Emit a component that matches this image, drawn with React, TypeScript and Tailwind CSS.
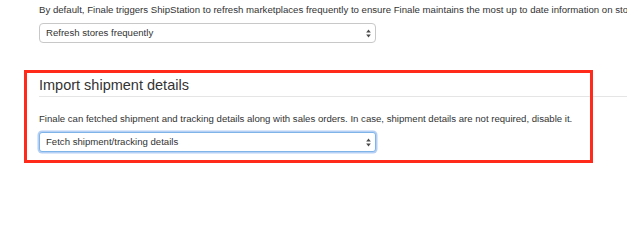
import React from "react";

function Arrows() {
  return (
    <svg width="5" height="9" viewBox="0 0 5 9" className="shrink-0">
      <path d="M2.5 0.5 L4.8 3.6 L0.2 3.6 Z" fill="#4a4a4a" />
      <path d="M2.5 8.5 L4.8 5.4 L0.2 5.4 Z" fill="#4a4a4a" />
    </svg>
  );
}

export default function App() {
  return (
    <div
      className="relative w-[627px] h-[227px] overflow-hidden bg-white text-[#333]"
      style={{ fontFamily: '"Liberation Sans", Arial, sans-serif' }}
    >
      <div className="pl-[39px] pt-[4px]">
        <p className="whitespace-nowrap text-[9.65px] leading-[12px]">
          By default, Finale triggers ShipStation to refresh marketplaces frequently to ensure Finale maintains the most up to date information on stores.
        </p>
        <div className="mt-[7px] w-[337px] h-[20px] border border-[#c8c8c8] rounded-[4px] bg-white flex items-center justify-between pl-[6px] pr-[4px] text-[9.6px] text-[#333]">
          <span>Refresh stores frequently</span>
          <Arrows />
        </div>

        <h4 className="mt-[34px] text-[14.5px] leading-[17px] font-normal text-[#333]">
          Import shipment details
        </h4>
        <div className="mt-[2px] border-t border-[#e5e5e5]" />
        <p className="mt-[16px] whitespace-nowrap text-[9.6px] leading-[12px]">
          Finale can fetched shipment and tracking details along with sales orders. In case, shipment details are not required, disable it.
        </p>
        <div className="mt-[7px] w-[337px] h-[20px] border border-[#7fb4e8] rounded-[3px] bg-white shadow-[0_0_0_1.5px_rgba(120,170,235,0.55)] flex items-center justify-between pl-[6px] pr-[4px] text-[9.6px] text-[#333]">
          <span>Fetch shipment/tracking details</span>
          <Arrows />
        </div>
      </div>

      <div className="absolute left-[24px] top-[70px] w-[569px] h-[93px] border-[3px] border-[#ff2a1a]" />
    </div>
  );
}
